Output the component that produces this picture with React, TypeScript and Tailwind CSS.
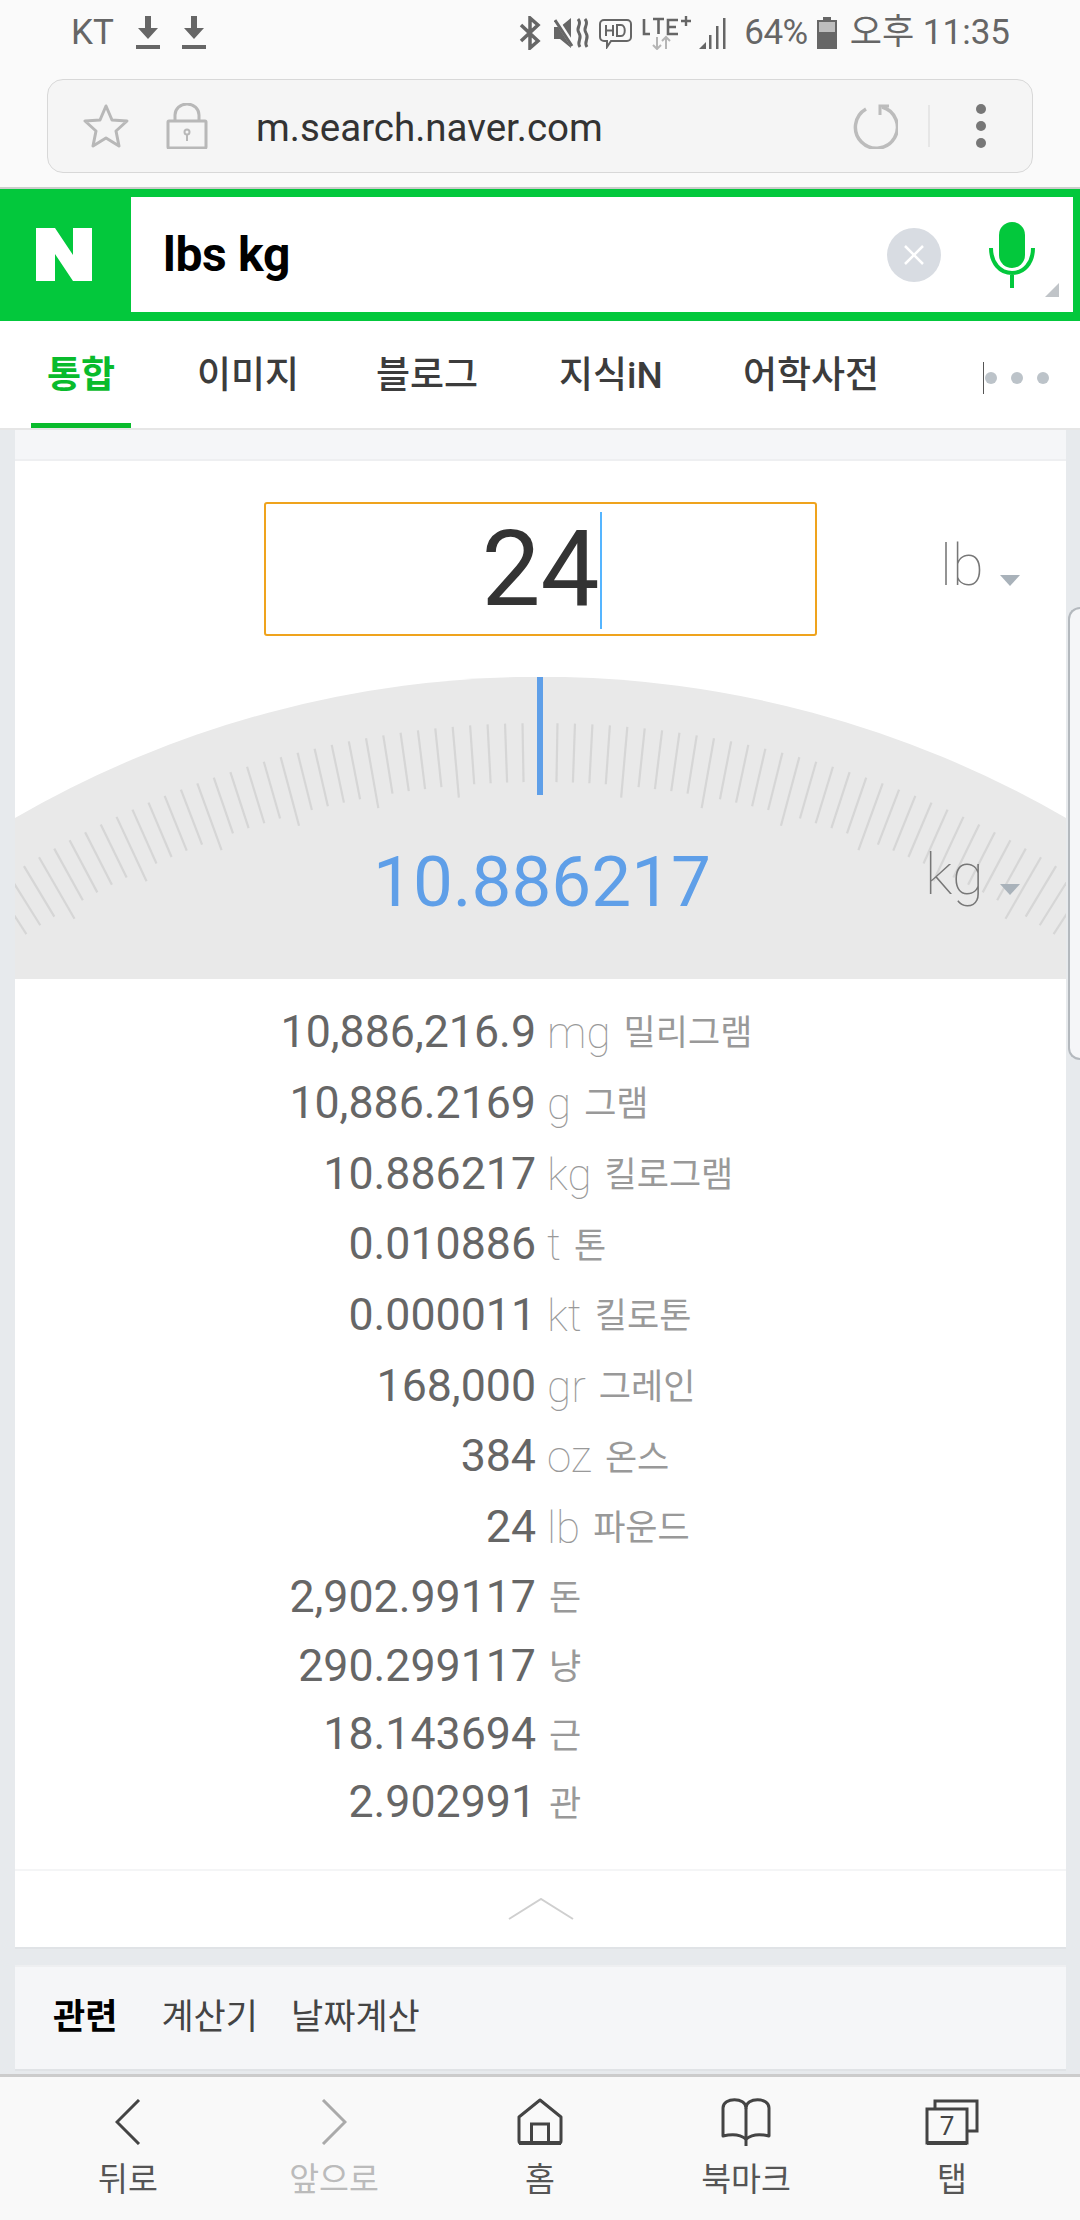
const ROBOTO = "font-['Roboto','Noto_Sans_CJK_KR',sans-serif]";

const rows: { v: string; u?: string; k: string; h: string }[] = [
  { v: "10,886,216.9", u: "mg", k: "밀리그램", h: "h-[71px]" },
  { v: "10,886.2169", u: "g", k: "그램", h: "h-[71px]" },
  { v: "10.886217", u: "kg", k: "킬로그램", h: "h-[71px]" },
  { v: "0.010886", u: "t", k: "톤", h: "h-[70px]" },
  { v: "0.000011", u: "kt", k: "킬로톤", h: "h-[71px]" },
  { v: "168,000", u: "gr", k: "그레인", h: "h-[71px]" },
  { v: "384", u: "oz", k: "온스", h: "h-[70px]" },
  { v: "24", u: "lb", k: "파운드", h: "h-[71px]" },
  { v: "2,902.99117", k: "돈", h: "h-[69px]" },
  { v: "290.299117", k: "냥", h: "h-[69px]" },
  { v: "18.143694", k: "근", h: "h-[68px]" },
  { v: "2.902991", k: "관", h: "h-[68px]" },
];

function Gauge() {
  const ticks = [];
  for (let i = -36; i <= 36; i++) {
    if (i === 0) continue;
    const a = (i * Math.PI) / 180;
    const outer = 1002;
    const inner = i % 5 === 0 ? 931 : 943;
    const cx = 525;
    const cy = 1048;
    ticks.push(
      <line
        key={i}
        x1={cx + outer * Math.sin(a)}
        y1={cy - outer * Math.cos(a)}
        x2={cx + inner * Math.sin(a)}
        y2={cy - inner * Math.cos(a)}
        stroke="#d6d6d6"
        strokeWidth="2.2"
      />
    );
  }
  return (
    <svg width="1051" height="302" viewBox="0 0 1051 302" className="block">
      <path d="M0 141 A1048 1048 0 0 1 1051 141 L1051 302 L0 302 Z" fill="#e9e9e9" />
      {ticks}
      <rect x="522" y="0" width="6" height="118" fill="#5f9fe8" />
    </svg>
  );
}

function Caret({ className }: { className: string }) {
  return (
    <svg width="20" height="11" viewBox="0 0 20 11" className={className}>
      <path d="M0 0H20L10 11Z" fill="#a9b2ba" />
    </svg>
  );
}

function NavItem({ label, muted, children }: { label: string; muted?: boolean; children: React.ReactNode }) {
  return (
    <div className="flex w-[207px] flex-col items-center">
      <div className="flex h-[50px] items-center justify-center">{children}</div>
      <div className={`mt-[11px] text-[32.5px] leading-[44px] ${muted ? "text-[#bbbbbb]" : "text-[#555555]"}`}>{label}</div>
    </div>
  );
}

export default function App() {
  return (
    <div className={`relative flex h-[2220px] w-[1080px] flex-col overflow-hidden bg-[#e7eaed] ${ROBOTO}`}>
      {/* status bar */}
      <div className="flex h-[79px] items-center bg-[#fafafa] pb-[13px] pl-[71px] pr-[70px] text-[35px] text-[#666666]">
        <span>KT</span>
        <svg width="26" height="34" viewBox="0 0 26 34" className="ml-[21px]" fill="#666666">
          <path d="M10 0h6v12h7L13 23 3 12h7Z" />
          <rect x="1" y="29" width="24" height="4" />
        </svg>
        <svg width="26" height="34" viewBox="0 0 26 34" className="ml-[20px]" fill="#666666">
          <path d="M10 0h6v12h7L13 23 3 12h7Z" />
          <rect x="1" y="29" width="24" height="4" />
        </svg>
        <div className="flex-1" />
        <svg width="22" height="34" viewBox="0 0 22 34" fill="none" stroke="#666666" strokeWidth="3.5">
          <path d="M2 9 19 25 11 32V2l8 7L2 25" />
        </svg>
        <svg width="36" height="32" viewBox="0 0 36 32" className="ml-[13px]">
          <path d="M0 10h6L17 1v30L6 22H0Z" fill="#666666" />
          <path d="M2 2 20 30" stroke="#fafafa" strokeWidth="5" />
          <path d="M1 3 18 29" stroke="#666666" strokeWidth="3" />
          <path d="M24 2c5 6-3 8 1 14s-3 8 1 14M31 2c5 6-3 8 1 14s-3 8 1 14" fill="none" stroke="#666666" strokeWidth="3" />
        </svg>
        <svg width="33" height="32" viewBox="0 0 33 32" className="ml-[9px]" fill="none" stroke="#666666" strokeWidth="2">
          <path d="M5 3h23a4 4 0 0 1 4 4v13a4 4 0 0 1-4 4H12l-4 6v-6H5a4 4 0 0 1-4-4V7a4 4 0 0 1 4-4Z" />
          <path d="M7 8v11M7 13.5h7M14 8v11M18 8v11h4c5 0 5-11 0-11Z" />
        </svg>
        <svg width="50" height="34" viewBox="0 0 50 34" className="ml-[10px]">
          <path d="M2 3v15h6M11 3h11M16.5 3v15M36 4H26v14h10M26 11h8" fill="none" stroke="#666666" strokeWidth="2.6" />
          <path d="M39 5h10M44 0v10" stroke="#666666" strokeWidth="2.4" />
          <path d="M15 21v12M11 29l4 4 4-4M24 33V21M20 25l4-4 4 4" fill="none" stroke="#b5b5b5" strokeWidth="2" />
        </svg>
        <svg width="30" height="34" viewBox="0 0 30 34" className="ml-[7px]" fill="#666666">
          <path d="M0 33l7-7v7Z" />
          <rect x="10" y="19" width="2.5" height="14" />
          <rect x="17" y="10" width="2.5" height="23" />
          <rect x="24" y="2" width="2.5" height="31" />
        </svg>
        <span className="ml-[15px] tracking-[-0.5px]">64%</span>
        <svg width="20" height="32" viewBox="0 0 20 32" className="ml-[9px]">
          <rect x="6" y="0" width="8" height="3" fill="#666666" />
          <rect x="0" y="3" width="20" height="29" fill="#666666" />
          <rect x="2" y="5" width="16" height="10" fill="#bdbdbd" />
        </svg>
        <span className="ml-[13px] whitespace-nowrap">오후 11:35</span>
      </div>

      {/* address bar */}
      <div className="h-[110px] border-b-2 border-[#cccccc] bg-[#fafafa] pl-[47px] pr-[47px]">
        <div className="flex h-[94px] items-center rounded-[16px] border border-[#d8d8d8] bg-[#f5f5f5]">
          <svg width="46" height="46" viewBox="0 0 46 46" className="ml-[35px]" fill="none" stroke="#b8b8b8" strokeWidth="3">
            <path d="M23 3l6 14 15 1-11 10 3 15-13-8-13 8 3-15L2 18l15-1Z" strokeLinejoin="round" />
          </svg>
          <svg width="42" height="46" viewBox="0 0 42 46" className="ml-[37px]" fill="none" stroke="#b8b8b8" strokeWidth="3">
            <rect x="2" y="18" width="38" height="27" rx="1" />
            <path d="M9 18V12a12 11 0 0 1 24 0v6" />
            <circle cx="21" cy="29" r="2.5" strokeWidth="2" />
            <path d="M21 31v7" strokeWidth="2" />
          </svg>
          <span className="ml-[48px] pt-[3px] text-[38.5px] text-[#333333]">m.search.naver.com</span>
          <div className="flex-1" />
          <svg width="46" height="46" viewBox="0 0 46 46" fill="none" stroke="#bcbcbc" strokeWidth="3.5">
            <path d="M14 6A21 21 0 1 0 30 4" />
            <path d="M28 12V3h9" strokeWidth="3" />
          </svg>
          <div className="ml-[30px] h-[42px] w-[2px] bg-[#e6e6e6]" />
          <div className="ml-[46px] mr-[46px] flex flex-col gap-[7px]">
            <div className="h-[10px] w-[10px] rounded-full bg-[#777777]" />
            <div className="h-[10px] w-[10px] rounded-full bg-[#777777]" />
            <div className="h-[10px] w-[10px] rounded-full bg-[#777777]" />
          </div>
        </div>
      </div>

      {/* search */}
      <div className="flex h-[132px] bg-[#03c83c] pb-[9px] pr-[7px] pt-[8px]">
        <div className="flex w-[131px] items-center justify-start pb-[1px] pl-[36px]">
          <svg width="56" height="53" viewBox="0 0 56 53" fill="#ffffff">
            <path d="M0 0H19L37 27V0H56V53H37L19 26V53H0Z" />
          </svg>
        </div>
        <div className="relative flex flex-1 items-center bg-white pl-[32px]">
          <span className="text-[48px] font-bold tracking-[-0.3px] text-black">lbs kg</span>
          <div className="flex-1" />
          <div className="flex h-[54px] w-[54px] items-center justify-center rounded-full bg-[#d8dce2]">
            <svg width="24" height="24" viewBox="0 0 24 24" stroke="#ffffff" strokeWidth="2.5">
              <path d="M3 3 21 21M21 3 3 21" />
            </svg>
          </div>
          <svg width="46" height="66" viewBox="0 0 46 66" className="ml-[48px] mr-[38px]" fill="none">
            <rect x="10" y="0" width="26" height="46" rx="13" fill="#03c83c" />
            <path d="M2 26c0 15 9 25 21 25s21-10 21-25M23 51v15" stroke="#03c83c" strokeWidth="4" />
          </svg>
          <svg width="14" height="14" viewBox="0 0 14 14" className="absolute bottom-[15px] right-[14px]">
            <path d="M14 0V14H0Z" fill="#c0c4c8" />
          </svg>
        </div>
      </div>

      {/* tabs */}
      <div className="relative flex h-[109px] items-center border-b-2 border-[#e6e6e6] bg-white pt-[2px] text-[37px] font-medium text-[#3c3c3c]">
        <span className="ml-[47px] w-[150px] font-bold text-[#09bb2c]">통합</span>
        <span className="w-[179px]">이미지</span>
        <span className="w-[183px]">블로그</span>
        <span className="w-[184px]">지식iN</span>
        <span>어학사전</span>
        <div className="absolute bottom-0 left-[31px] h-[5px] w-[100px] bg-[#09bb2c]" />
        <div className="absolute left-[983px] top-[41px] h-[32px] w-[1px] bg-[#555555]" />
        <div className="absolute left-[985px] top-[51px] flex gap-[14px]">
          <div className="h-[12px] w-[12px] rounded-full bg-[#bcc3c9]" />
          <div className="h-[12px] w-[12px] rounded-full bg-[#bcc3c9]" />
          <div className="h-[12px] w-[12px] rounded-full bg-[#bcc3c9]" />
        </div>
      </div>

      {/* content */}
      <div className="relative flex-1 overflow-hidden pl-[15px] pr-[14px]">
        <div className="h-[31px] border-b-2 border-[#eeeff1] bg-[#f5f6f8]" />
        <div className="border-b-2 border-[#e0e3e6] bg-white">
          <div className="relative h-[216px] pl-[249px] pt-[41px]">
            <div className="relative flex h-[134px] w-[553px] items-center justify-center rounded-[3px] border-2 border-[#efa31d] text-[105px] leading-none text-[#333333]">
              24
              <div className="absolute left-[334px] top-[8px] h-[117px] w-[2px] bg-[#55b5ff]" />
            </div>
            <span className="absolute left-[925px] top-[61px] text-[58px] font-thin text-[#777777]">lb</span>
            <Caret className="absolute left-[985px] top-[114px]" />
          </div>
          <div className="relative h-[302px]">
            <Gauge />
            <div className="absolute left-[358px] top-[164px] text-[71px] leading-[82px] text-[#5f9fe8]">10.886217</div>
            <div className="absolute left-[910px] top-[163px] text-[58px] font-thin leading-[68px] text-[#777777]">kg</div>
            <Caret className="absolute left-[985px] top-[207px]" />
          </div>
          <div className="border-b-2 border-[#f4f5f6] pb-[32px] pt-[18px]">
            {rows.map((r) => (
              <div key={r.v} className={`flex items-center ${r.h}`}>
                <div className="w-[521px] text-right text-[44.7px] text-[#666666]">{r.v}</div>
                {r.u ? <span className="ml-[11px] text-[44px] font-thin text-[#999999]">{r.u}</span> : null}
                <span className="ml-[13px] translate-y-[2px] text-[35px] text-[#999999]">{r.k}</span>
              </div>
            ))}
          </div>
          <div className="flex h-[76px] items-start justify-center pt-[27px]">
            <svg width="66" height="22" viewBox="0 0 66 22" fill="none" stroke="#cfcfcf" strokeWidth="2">
              <path d="M1 21 33 1 65 21" />
            </svg>
          </div>
        </div>
        <div className="mt-[16px] flex h-[106px] items-center border-y-2 border-[#e0e3e6] border-t-[#eeeff1] bg-[#f5f6f8] pl-[38px] text-[35px] text-[#444444]">
          <span className="font-bold text-black">관련</span>
          <span className="ml-[44px]">계산기</span>
          <span className="ml-[33px]">날짜계산</span>
        </div>
      </div>

      {/* bottom nav */}
      <div className="flex h-[146px] justify-between border-t-[3px] border-[#cccccc] bg-[#f9f9f9] pl-[25px] pr-[25px] pt-[20px]">
        <NavItem label="뒤로">
          <svg width="26" height="46" viewBox="0 0 26 46" fill="none" stroke="#444444" strokeWidth="3">
            <path d="M24 1 2 23 24 45" />
          </svg>
        </NavItem>
        <NavItem label="앞으로" muted>
          <svg width="26" height="46" viewBox="0 0 26 46" fill="none" stroke="#aaaaaa" strokeWidth="3">
            <path d="M2 1 24 23 2 45" />
          </svg>
        </NavItem>
        <NavItem label="홈">
          <svg width="46" height="48" viewBox="0 0 46 48" fill="none" stroke="#444444" strokeWidth="3">
            <path d="M23 2 44 19V43a2 2 0 0 1-2 2H4a2 2 0 0 1-2-2V19Z" strokeLinejoin="round" />
            <path d="M14.500 45V26H31.500V45" />
            <path d="M2 45H44" strokeWidth="4" />
          </svg>
        </NavItem>
        <NavItem label="북마크">
          <svg width="50" height="48" viewBox="0 0 50 48" fill="none" stroke="#444444" strokeWidth="3">
            <path d="M25 10C25 -1 2 -1 2 10V38c8-2 17-2 23 3 6-5 15-5 23-3V10C48 -1 25 -1 25 10Z" strokeLinejoin="round" />
            <path d="M25 10V48" />
          </svg>
        </NavItem>
        <NavItem label="탭">
          <svg width="54" height="46" viewBox="0 0 54 46" fill="none" stroke="#444444" strokeWidth="3">
            <path d="M10 9V2H52V32H42" />
            <rect x="2" y="10" width="40" height="34" />
            <path d="M2 44H42" strokeWidth="4" />
            <text x="22" y="36" textAnchor="middle" fontSize="26" fill="#444444" stroke="none" fontFamily="Roboto">7</text>
          </svg>
        </NavItem>
      </div>

      {/* edge handle lying over the page */}
      <div className="absolute right-0 top-[607px] h-[453px] w-[12px] rounded-l-[12px] border-y-2 border-l-2 border-[#b4b9be] bg-[#f5f6f8]" />
    </div>
  );
}
